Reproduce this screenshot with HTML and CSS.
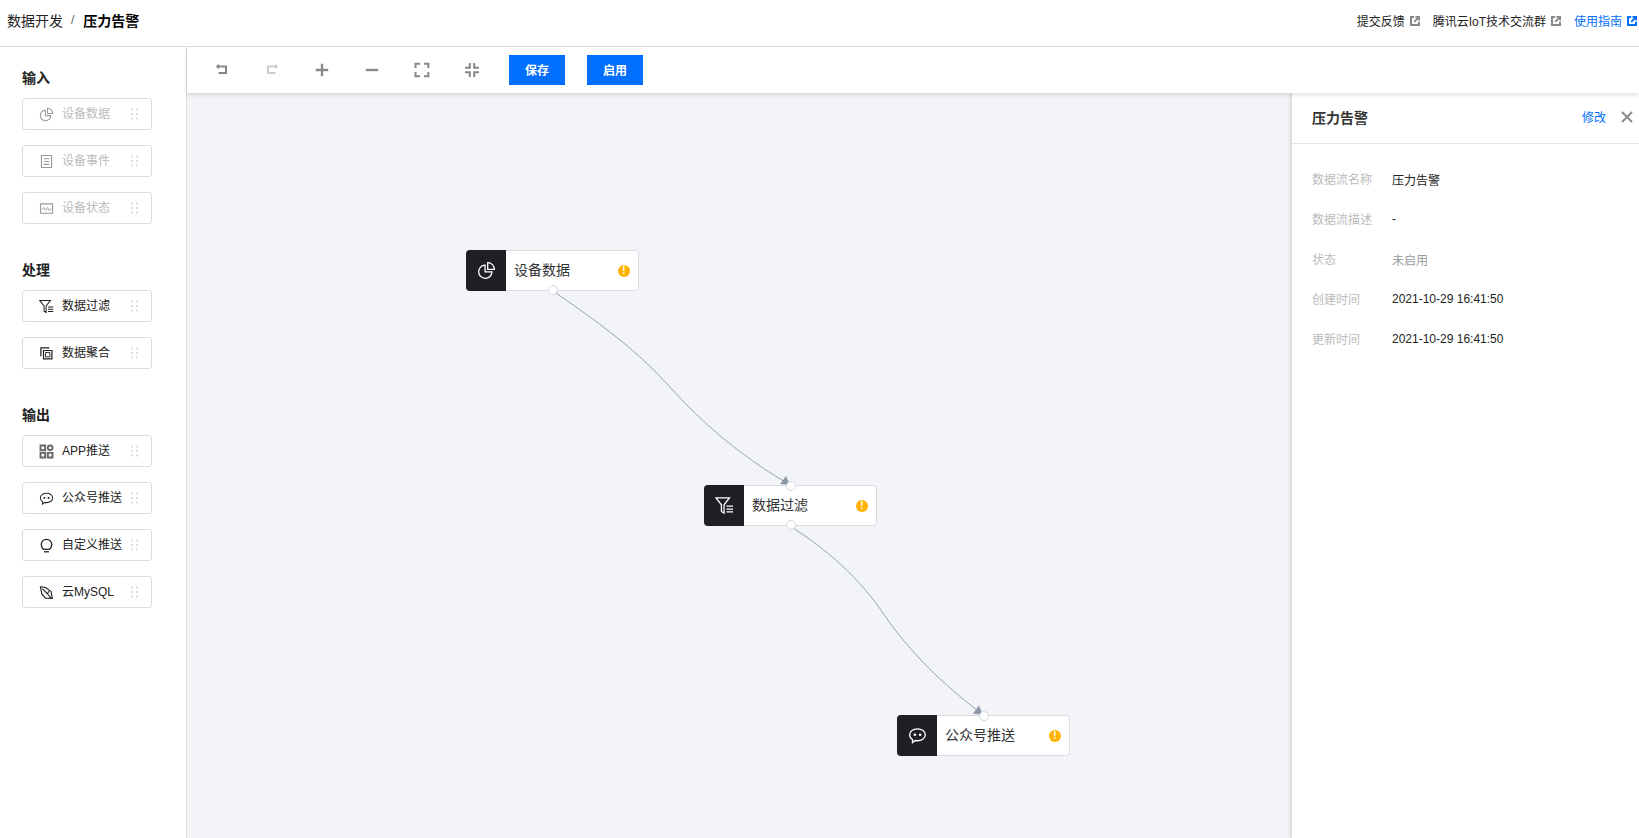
FILE: index.html
```html
<!DOCTYPE html>
<html lang="zh-CN">
<head>
    <meta charset="UTF-8">
    <title>压力告警 - 数据开发</title>
    <link rel="stylesheet" href="styles.css">
</head>
<body>
    <!-- Shared icons -->
    <svg class="icon-defs" width="0" height="0">
        <symbol id="i-pie" viewBox="0 0 16 16"><path d="M6.800 3.400a5.600 5.600 0 1 0 5.800 5.800H6.800z" fill="none" stroke="currentColor" stroke-width="1.100"/><path d="M9 1.400a5.600 5.600 0 0 1 5.600 5.600H9z" fill="none" stroke="currentColor" stroke-width="1.100"/></symbol>
        <symbol id="i-doc" viewBox="0 0 16 16"><path d="M2.600 1.600h10.800v12.800H2.600zM5 5h6M5 8h6M5 11h6" fill="none" stroke="currentColor" stroke-width="1.200"/></symbol>
        <symbol id="i-wave" viewBox="0 0 16 16"><path d="M1.600 3h12.800v10H1.600z" fill="none" stroke="currentColor" stroke-width="1.200"/><path d="M3 9l2-2 2 3 2-3 2 3 2-2" fill="none" stroke="currentColor" stroke-width="1"/></symbol>
        <symbol id="i-filter" viewBox="0 0 16 16"><path d="M.800 1.600h11.400L7.600 7.400v7L5.400 13V7.400zM9.600 8.600h5.600M9.600 11h5.600M9.600 13.400h5.600" fill="none" stroke="currentColor" stroke-width="1.100"/></symbol>
        <symbol id="i-copy" viewBox="0 0 16 16"><path d="M11 2H2v9M4.800 4.800h9v9h-9z" fill="none" stroke="currentColor" stroke-width="1.300"/><path d="M7 7h4.600v4.600H7z" fill="none" stroke="currentColor" stroke-width="1"/></symbol>
        <symbol id="i-apps" viewBox="0 0 16 16"><path d="M1.600 1.600h5v5h-5zM1.600 9.400h5v5h-5zM9.400 9.400h5v5h-5z" fill="none" stroke="currentColor" stroke-width="2"/><circle cx="11.900" cy="4.100" r="2.500" fill="none" stroke="currentColor" stroke-width="2"/></symbol>
        <symbol id="i-chat" viewBox="0 0 16 16"><path d="M8 2.400c3.700 0 6.600 2.200 6.600 5s-2.900 5-6.600 5c-.7 0-1.400-.1-2-.2L3.800 14v-2.600C2.300 10.500 1.400 9 1.400 7.400c0-2.800 2.900-5 6.600-5z" fill="none" stroke="currentColor" stroke-width="1.100"/><circle cx="5.800" cy="7.400" r="1.100" fill="currentColor"/><circle cx="10.200" cy="7.400" r="1.100" fill="currentColor"/></symbol>
        <symbol id="i-bulb" viewBox="0 0 16 16"><path d="M5 12.200C3.400 11 2.400 9.100 2.400 7a5.600 5.600 0 0 1 11.200 0c0 2.100-1 4-2.600 5.200z" fill="none" stroke="currentColor" stroke-width="1.400"/><path d="M5.400 14.700h5.200" fill="none" stroke="currentColor" stroke-width="1.400"/></symbol>
        <symbol id="i-leaf" viewBox="0 0 16 16"><path d="M1.500 1.800L7 2.600 12.800 7l1.400 7.300-7.200-.3L3 9.500zM3.600 3.800l5.600 5.800M9.200 9.600l3.600 4.400M9.200 9.600l1-3" fill="none" stroke="currentColor" stroke-width="1.200"/></symbol>
        <symbol id="i-drag" viewBox="0 0 8 14"><path d="M0 1.500h2v2H0zM5 1.500h2v2H5zM0 6h2v2H0zM5 6h2v2H5zM0 10.500h2v2H0zM5 10.500h2v2H5z" fill="currentColor"/></symbol>
        <symbol id="i-link" viewBox="0 0 10 10"><path d="M4.200 1H1v8h8V5.800" fill="none" stroke="currentColor" stroke-width="2"/><path d="M5.400.8h3.800v3.800M9 1L4.200 5.800" fill="none" stroke="currentColor" stroke-width="1.800"/></symbol>
    </svg>

    <!-- Header -->
    <header class="topbar">
        <div class="crumbs">
            <a class="crumb-link">数据开发</a>
            <span class="crumb-sep">/</span>
            <span class="crumb-current">压力告警</span>
        </div>
        <div class="top-links">
            <a class="top-link"><span>提交反馈</span><svg class="link-icon"><use href="#i-link"/></svg></a>
            <a class="top-link"><span>腾讯云IoT技术交流群</span><svg class="link-icon"><use href="#i-link"/></svg></a>
            <a class="top-link primary"><span>使用指南</span><svg class="link-icon"><use href="#i-link"/></svg></a>
        </div>
    </header>

    <div class="main">
        <!-- Node palette -->
        <aside class="palette">
            <section class="group">
                <h3 class="group-title">输入</h3>
                <div class="item disabled"><svg class="item-icon"><use href="#i-pie"/></svg><span>设备数据</span><svg class="drag"><use href="#i-drag"/></svg></div>
                <div class="item disabled"><svg class="item-icon"><use href="#i-doc"/></svg><span>设备事件</span><svg class="drag"><use href="#i-drag"/></svg></div>
                <div class="item disabled"><svg class="item-icon"><use href="#i-wave"/></svg><span>设备状态</span><svg class="drag"><use href="#i-drag"/></svg></div>
            </section>
            <section class="group">
                <h3 class="group-title">处理</h3>
                <div class="item"><svg class="item-icon"><use href="#i-filter"/></svg><span>数据过滤</span><svg class="drag"><use href="#i-drag"/></svg></div>
                <div class="item"><svg class="item-icon"><use href="#i-copy"/></svg><span>数据聚合</span><svg class="drag"><use href="#i-drag"/></svg></div>
            </section>
            <section class="group">
                <h3 class="group-title">输出</h3>
                <div class="item"><svg class="item-icon grey"><use href="#i-apps"/></svg><span>APP推送</span><svg class="drag"><use href="#i-drag"/></svg></div>
                <div class="item"><svg class="item-icon"><use href="#i-chat"/></svg><span>公众号推送</span><svg class="drag"><use href="#i-drag"/></svg></div>
                <div class="item"><svg class="item-icon"><use href="#i-bulb"/></svg><span>自定义推送</span><svg class="drag"><use href="#i-drag"/></svg></div>
                <div class="item"><svg class="item-icon"><use href="#i-leaf"/></svg><span>云MySQL</span><svg class="drag"><use href="#i-drag"/></svg></div>
            </section>
        </aside>

        <div class="workspace">
            <!-- Toolbar -->
            <div class="toolbar">
                <button class="tool"><svg viewBox="0 0 16 16"><path d="M3 4.500h9v6.500H4.500" fill="none" stroke="currentColor" stroke-width="2"/><path d="M5 1.800v5.400L1.800 4.500z" fill="currentColor"/></svg></button>
                <button class="tool faint"><svg viewBox="0 0 16 16"><path d="M13 4.500H4v6.500h7.500" fill="none" stroke="currentColor" stroke-width="2"/><path d="M11 1.800v5.400l3.200-2.700z" fill="currentColor"/></svg></button>
                <button class="tool"><svg viewBox="0 0 16 16"><path d="M1.800 8h12.400M8 1.800v12.400" fill="none" stroke="currentColor" stroke-width="2.400"/></svg></button>
                <button class="tool"><svg viewBox="0 0 16 16"><path d="M1.800 8h12.400" fill="none" stroke="currentColor" stroke-width="2.400"/></svg></button>
                <button class="tool"><svg viewBox="0 0 16 16"><path d="M1.500 6V1.800H6M10 1.800h4.300V6M14.300 10v4.200H10M6 14.200H1.500V10" fill="none" stroke="currentColor" stroke-width="2"/></svg></button>
                <button class="tool"><svg viewBox="0 0 16 16"><path d="M1 5.800h4.800V1M10.200 1v4.800H15M15 10.200h-4.800V15M5.800 15v-4.800H1" fill="none" stroke="currentColor" stroke-width="2"/></svg></button>
                <button class="btn save">保存</button>
                <button class="btn">启用</button>
            </div>

            <div class="stage">
                <!-- Flow canvas -->
                <div class="canvas">
                    <svg class="edges" width="1105" height="745">
                        <path class="edge" d="M553 198C595 227 635 255 669 293C703 331 740 362 785 389"/>
                        <path class="arrow" d="M790 392L780 391L786 383z"/>
                        <path class="edge" d="M790 433C825 455 860 485 885 523C905 552 935 585 977 617"/>
                        <path class="arrow" d="M983 622L973 620.500L979 612.500z"/>
                    </svg>

                    <div class="node node-device">
                        <div class="node-icon"><svg><use href="#i-pie"/></svg></div>
                        <span class="node-name">设备数据</span>
                        <i class="warn">!</i>
                        <i class="port port-bottom"></i>
                    </div>
                    <div class="node node-filter">
                        <div class="node-icon"><svg><use href="#i-filter"/></svg></div>
                        <span class="node-name">数据过滤</span>
                        <i class="warn">!</i>
                        <i class="port port-top"></i>
                        <i class="port port-bottom"></i>
                    </div>
                    <div class="node node-push">
                        <div class="node-icon"><svg><use href="#i-chat"/></svg></div>
                        <span class="node-name">公众号推送</span>
                        <i class="warn">!</i>
                        <i class="port port-top"></i>
                    </div>
                </div>

                <!-- Detail panel -->
                <aside class="detail">
                    <div class="detail-head">
                        <h2>压力告警</h2>
                        <a class="edit">修改</a>
                        <svg class="close" viewBox="0 0 12 12"><path d="M1 1l10 10M11 1L1 11" fill="none" stroke="currentColor" stroke-width="1.800"/></svg>
                    </div>
                    <dl class="fields">
                        <div class="field"><dt>数据流名称</dt><dd>压力告警</dd></div>
                        <div class="field"><dt>数据流描述</dt><dd>-</dd></div>
                        <div class="field"><dt>状态</dt><dd class="muted">未启用</dd></div>
                        <div class="field"><dt>创建时间</dt><dd>2021-10-29 16:41:50</dd></div>
                        <div class="field"><dt>更新时间</dt><dd>2021-10-29 16:41:50</dd></div>
                    </dl>
                </aside>
            </div>
        </div>
    </div>
</body>
</html>
```

FILE: styles.css
```css
* {
    margin: 0;
    padding: 0;
    box-sizing: border-box;
}

html, body {
    height: 100%;
    overflow: hidden;
}

body {
    font-family: "Liberation Sans", "Noto Sans CJK SC", sans-serif;
    font-size: 12px;
    color: #222;
    background: #fff;
    display: flex;
    flex-direction: column;
}

.icon-defs {
    position: absolute;
}

/* Header */
.topbar {
    height: 47px;
    flex: none;
    display: flex;
    justify-content: space-between;
    align-items: center;
    padding: 0 2px 6px 7px;
    border-bottom: 1px solid #ddd;
}

.crumbs {
    display: flex;
    align-items: center;
    font-size: 14px;
}

.crumb-sep {
    margin: 0 9px 0 8px;
    font-size: 12px;
    color: #666;
}

.crumb-current {
    font-weight: bold;
    color: #000;
}

.top-links {
    display: flex;
    gap: 13px;
}

.top-link {
    display: flex;
    align-items: center;
    gap: 5px;
}

.top-link .link-icon {
    color: #888;
    margin-top: 2px;
}

.top-link.primary,
.top-link.primary .link-icon {
    color: #006eff;
}

.link-icon {
    width: 10px;
    height: 10px;
}

.main {
    flex: 1;
    display: flex;
    min-height: 0;
}

/* Palette */
.palette {
    width: 187px;
    flex: none;
    padding: 21px 0 0 22px;
    border-right: 1px solid #ddd;
}

.group + .group {
    margin-top: 36px;
}

.group-title {
    height: 20px;
    margin-bottom: 10px;
    font-size: 14px;
    line-height: 20px;
    font-weight: bold;
    color: #222;
}

.item {
    width: 130px;
    height: 32px;
    display: flex;
    align-items: center;
    padding: 0 12px 0 16px;
    border: 1px solid #ddd;
    border-radius: 3px;
    background: #fff;
}

.item + .item {
    margin-top: 15px;
}

.item span {
    padding-bottom: 3px;
}

.item-icon {
    width: 15px;
    height: 15px;
    margin-right: 8px;
    flex: none;
    color: #222;
}

.item-icon.grey {
    color: #666;
}

.item.disabled {
    color: #bbb;
}

.item.disabled .item-icon {
    color: #999;
}

.drag {
    width: 8px;
    height: 14px;
    margin-left: auto;
    flex: none;
    color: #ddd;
}

/* Toolbar */
.workspace {
    flex: 1;
    min-width: 0;
    display: flex;
    flex-direction: column;
}

.toolbar {
    height: 46px;
    flex: none;
    display: flex;
    align-items: center;
    padding-left: 10px;
    position: relative;
    z-index: 2;
    box-shadow: 0 2px 4px rgba(0, 0, 0, 0.12);
    background: #fff;
}

.tool {
    width: 50px;
    height: 30px;
    display: flex;
    justify-content: center;
    align-items: center;
    border: none;
    background: none;
    color: #888;
}

.tool svg {
    width: 16px;
    height: 16px;
}

.tool.faint {
    color: #ccc;
}

.btn {
    width: 56px;
    height: 30px;
    margin-left: 22px;
    padding-bottom: 2px;
    border: none;
    background: #006eff;
    color: #fff;
    font-family: inherit;
    font-size: 12px;
    font-weight: bold;
}

.btn.save {
    margin-left: 12px;
}

/* Canvas */
.stage {
    flex: 1;
    min-height: 0;
    display: flex;
}

.canvas {
    flex: 1;
    position: relative;
    background: #f2f4f8;
    overflow: hidden;
}

.edges {
    position: absolute;
    left: -187px;
    top: 0;
}

.edge {
    fill: none;
    stroke: #98a3ad;
    stroke-width: 1;
}

.arrow {
    fill: #8c98a6;
}

.node {
    position: absolute;
    width: 173px;
    height: 41px;
    display: flex;
    align-items: center;
    background: #fff;
    border: 1px solid #d8dbe2;
    border-radius: 4px;
}

.node-device {
    left: 279px;
    top: 157px;
}

.node-filter {
    left: 517px;
    top: 392px;
}

.node-push {
    left: 710px;
    top: 622px;
}

.node-icon {
    width: 40px;
    align-self: stretch;
    margin: -1px 0 -1px -1px;
    flex: none;
    display: flex;
    justify-content: center;
    align-items: center;
    background: #1d1f24;
    border-radius: 4px 0 0 4px;
    color: #fff;
}

.node-icon svg {
    width: 19px;
    height: 19px;
}

.node-name {
    margin-left: 8px;
    padding-bottom: 3px;
    font-size: 14px;
    color: #333;
}

.warn {
    position: absolute;
    right: 8px;
    top: 14px;
    width: 12px;
    height: 12px;
    border-radius: 50%;
    background: #ffb300;
    color: #fff;
    font-style: normal;
    font-weight: bold;
    font-size: 10px;
    line-height: 12px;
    text-align: center;
}

.port {
    position: absolute;
    left: 81px;
    width: 10px;
    height: 10px;
    background: #fff;
    border: 1.5px solid #d3d7de;
    border-radius: 50%;
}

.port-top {
    top: -5px;
}

.port-bottom {
    bottom: -5px;
}

/* Detail panel */
.detail {
    width: 347px;
    flex: none;
    position: relative;
    background: #fff;
    box-shadow: -2px 0 3px rgba(0, 0, 0, 0.12);
}

.detail-head {
    height: 51px;
    display: flex;
    align-items: center;
    padding: 0 6px 3px 20px;
    border-bottom: 1px solid #e6e6e6;
}

.detail-head h2 {
    flex: 1;
    font-size: 14px;
    font-weight: bold;
    color: #333;
}

.edit {
    color: #006eff;
}

.close {
    width: 12px;
    height: 12px;
    margin-left: 15px;
    color: #888;
}

.fields {
    padding: 15px 0 0 20px;
}

.field {
    height: 40px;
    display: flex;
    align-items: center;
}

.field dt {
    width: 80px;
    padding-bottom: 2px;
    color: #bbb;
}

.field .muted {
    color: #999;
}
```
